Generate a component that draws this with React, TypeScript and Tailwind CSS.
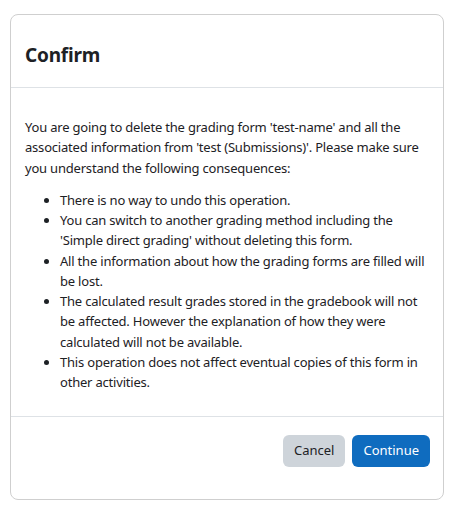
export default function App() {
  const items = [
    'There is no way to undo this operation.',
    "You can switch to another grading method including the 'Simple direct grading' without deleting this form.",
    'All the information about how the grading forms are filled will be lost.',
    'The calculated result grades stored in the gradebook will not be affected. However the explanation of how they were calculated will not be available.',
    'This operation does not affect eventual copies of this form in other activities.',
  ];

  return (
    <div className="min-h-[507px] bg-white pt-[14px] pl-[10px] font-['Noto_Sans',sans-serif] text-[#1d2125]">
      <div className="w-[434px] h-[486px] flex flex-col rounded-[8px] border border-[#cfcfcf] bg-white">
        {/* header */}
        <div className="h-[73px] flex items-center px-[14px] pt-[8px] border-b border-[#dee2e6]">
          <h1 className="text-[19px] font-bold leading-none tracking-[-0.2px]">Confirm</h1>
        </div>

        {/* body */}
        <div className="flex-1 px-[14px] pt-[29px] text-[13px] leading-[20.25px] tracking-[-0.2px]">
          <p>
            You are going to delete the grading form 'test-name' and all the associated information from 'test
            (Submissions)'. Please make sure you understand the following consequences:
          </p>
          <ul className="mt-[12px] list-disc pl-[35px]">
            {items.map((t) => (
              <li key={t}>{t}</li>
            ))}
          </ul>
        </div>

        {/* footer */}
        <div className="h-[83px] flex justify-end items-start gap-[7px] pt-[18px] px-[13px] border-t border-[#dee2e6]">
          <button className="h-[32px] px-[11px] rounded-[6px] bg-[#ced4da] text-[13px] text-[#1d2125]">Cancel</button>
          <button className="h-[32px] px-[11px] rounded-[6px] bg-[#0f6cbf] text-[13px] text-white">Continue</button>
        </div>
      </div>
    </div>
  );
}
